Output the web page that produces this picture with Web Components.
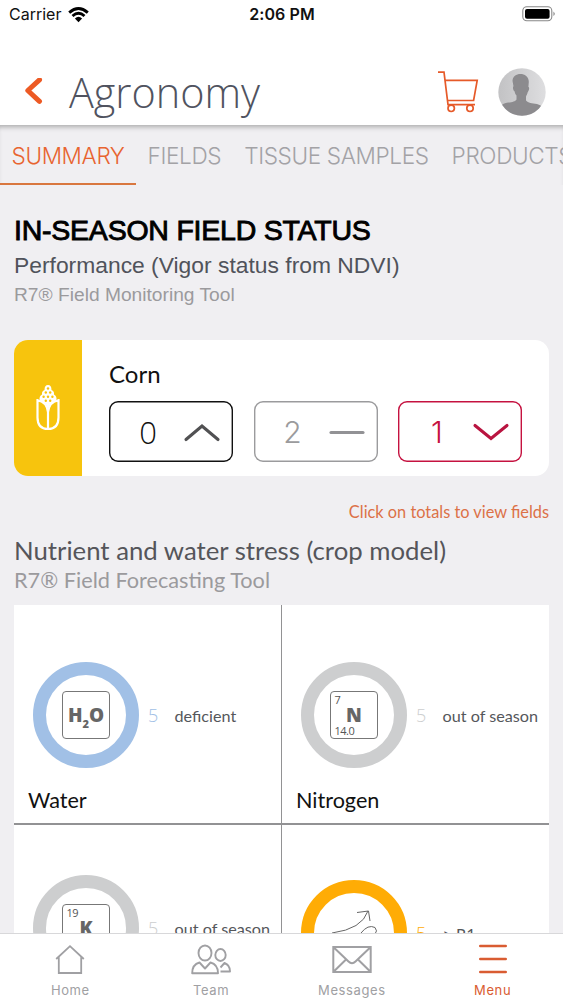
<!DOCTYPE html>
<html lang="en">
<head>
<meta charset="utf-8">
<title>Agronomy</title>
<style>
html,body{margin:0;height:100%;overflow:hidden;background:#f0eff2}
body{font-family:Lato,"Liberation Sans",sans-serif}
</style>
</head>
<body>
<agro-app></agro-app>
<script>
const define = (name, html) => customElements.define(name, class extends HTMLElement {
  constructor() {
    super();
    const t = document.createElement('template');
    t.innerHTML = typeof html === 'function' ? html(this) : html;
    this.attachShadow({mode: 'open'}).append(t.content.cloneNode(true));
  }
});

define('status-bar', `<style>
:host{display:grid;grid-template-columns:1fr auto 1fr;align-items:center;height:29px;padding:0 7px 0 9px;box-sizing:border-box;font:400 16px/29px Inter,sans-serif;color:#111}
.l{display:flex;align-items:center;gap:7px}.t{font-weight:600;font-size:16px;letter-spacing:.1px;margin-right:1px;position:static}.r{justify-self:end;display:flex;margin-top:-2px}
</style>
<div class="l"><span>Carrier</span><svg width="21" height="16" viewBox="0 0 21 16" fill="none" stroke="#000" stroke-width="2.9"><path d="M1.2 5.6Q10.5-2.4 19.8 5.6"/><path d="M4.5 9Q10.5 3.7 16.5 9"/><path d="M6.9 11.5Q10.5 8.2 14.1 11.5L10.5 15.2Z" fill="#000" stroke="none"/></svg></div>
<div class="t">2:06 PM</div>
<div class="r"><svg width="34" height="16" viewBox="0 0 34 16"><rect x=".8" y=".8" width="29" height="14" rx="4" fill="none" stroke="#888" stroke-width="1.1"/><rect x="3" y="3" width="24.6" height="9.7" rx="2"/><path d="M31.5 5.5q2.4 2.3 0 4.6z" fill="#777"/></svg></div>`);

define('app-header', `<style>
:host{display:flex;align-items:center;height:96px;padding:29px 17px 0 24px;box-sizing:border-box}
h1{margin:0 auto 0 26px;font:300 41.400px/60px "Open Sans",sans-serif;color:#50535f}
.cart{margin-right:19px}svg{flex:none;display:block}
</style>
<svg width="19" height="28" viewBox="0 0 19 28" fill="none" stroke="#ed5a24" stroke-width="5" stroke-linecap="round" stroke-linejoin="round"><path d="M15.500 1.800 3.800 12.500 15.500 23.400"/></svg>
<h1><slot></slot></h1>
<svg class="cart" width="42" height="42" viewBox="0 0 42 42" fill="none" stroke="#e65a29" stroke-width="1.700"><path d="M1 1.200h6L11 33.600H38"/><path d="M8 9.400H40.200L36.600 29.500H10.600"/><circle cx="14.200" cy="37.300" r="3.200"/><circle cx="33" cy="37.300" r="3.200"/></svg>
<svg width="48" height="48" viewBox="0 0 48 48"><defs><clipPath id="c"><circle cx="24" cy="24" r="23.700"/></clipPath><linearGradient id="g"><stop stop-color="#c2c2c4"/><stop offset="1" stop-color="#dedee0"/></linearGradient></defs><g clip-path="url(#c)"><path fill="url(#g)" d="M0 0h48v48H0z"/><path fill="#8c8b8e" d="M14.500 13C14.500 3.500 31 3.500 30.800 14l-.4 5c1.300 0 .8 3.700-.7 5.200-.4 2-1.200 3-1.700 4.200v4c2 2.600 6 2.600 11 3.600q3.500.8 5.500 3V50H3V38q2-2.600 7-3.400c5-.8 7-1 8.500-3.200v-3.800q-1.500-1.500-2-4.400c-1.500-.8-2-4.400-1-5z"/></g></svg>`);

define('tab-item', `<style>
:host{display:block;height:60px;box-sizing:border-box;padding:0 11.500px 0 11.500px;font:300 22.600px/62px Inter,sans-serif;letter-spacing:-.38px;color:#a3a2a6;white-space:nowrap;flex:none}
:host([active]){color:#e86430;border-bottom:2px solid #d9773f}
</style><slot></slot>`);

define('tab-strip', `<style>
:host{display:flex;height:60px;overflow:hidden;box-shadow:inset 0 5px 5px -3px #aaa}
</style><slot></slot>`);

define('crop-total', el => `<style>
:host{display:flex;align-items:center;box-sizing:border-box;width:124px;height:61px;box-shadow:inset 0 0 0 1.400px currentColor;border-radius:9px;padding:0 12px 0 27px;justify-content:space-between}
span{width:24px;text-align:center;line-height:60px}
svg{display:block}
</style><span><slot></slot></span><svg width="38" height="20" viewBox="0 0 38 20" fill="none" stroke="${el.getAttribute('tone')}" stroke-width="3.100" stroke-linecap="round"><path d="${el.getAttribute('mark')}"/></svg>`);

define('crop-card', `<style>
:host{display:flex;height:136px;border-radius:14px;overflow:hidden;background:#fff}
.side{width:68px;background:#f7c40d;display:grid;place-items:center}
.body{padding:20px 0 0 27px}
.name{font:400 24px/28px Lato,sans-serif;color:#111}
.row{display:flex;gap:20.500px;margin-top:13px}
.a{color:#111;font:300 31px "Open Sans",sans-serif}.b{color:#9b9b9d;font:300 30px Inter,sans-serif}.c{color:#c51240;font:300 30px Inter,sans-serif}
</style>
<div class="side"><svg width="26" height="48" viewBox="0 0 26 48" fill="none" stroke="#fff" stroke-width="2.200"><path d="M2.500 15v18.500q0 11.500 10.500 11.500t10.500-11.500V15M13 24V45M2.500 16.500q9 1 10.500 11.500M23.500 16.500q-9 1-10.500 11.500"/><path fill="#fff" stroke="none" d="M9.500 6Q9.500 1 13 1T16.500 6Q19.500 7 19 10.500 22 12 21.500 16.500 15.500 18 13 25 10.500 18 4.500 16.500 4 12 7 10.500 6.500 7 9.500 6Z"/><g fill="#f7c40d" stroke="none"><circle cx="13" cy="4.500" r="1.200"/><circle cx="10.800" cy="8.500" r="1.200"/><circle cx="15.200" cy="8.500" r="1.200"/><circle cx="8.600" cy="12.800" r="1.200"/><circle cx="13" cy="12.800" r="1.200"/><circle cx="17.400" cy="12.800" r="1.200"/><circle cx="10.800" cy="16.800" r="1.200"/><circle cx="15.200" cy="16.800" r="1.200"/></g></svg></div>
<div class="body"><div class="name"><slot></slot></div><div class="row">
<crop-total class="a" tone="#515153" mark="M3 17.500 19 4 35 17.500">0</crop-total>
<crop-total class="b" tone="#929295" mark="M3 10.500H35">2</crop-total>
<crop-total class="c" tone="#b91440" mark="M3 3.500 19 16.500 35 3.500">1</crop-total></div></div>`);

define('section-head', `<style>
:host{display:block}
</style><slot></slot>`);

define('stress-ring', `<style>
:host{display:grid;place-items:center;box-sizing:border-box;width:106px;height:106px;border:13px solid var(--ring);border-radius:50%;flex:none}
</style><slot></slot>`);

define('element-tile', el => `<style>
:host{display:grid;grid-template-rows:14px 18px 14px;box-sizing:border-box;width:48px;height:48px;border:1px solid #777;border-radius:4px;color:#555}
b{font:800 19px/18px "Open Sans",sans-serif;text-align:center;color:#666}
i{font:400 11px/14px "Open Sans",sans-serif;letter-spacing:-.5px;padding-left:3.500px}.n{padding-top:1px}
</style><i class="n">${el.getAttribute('number') || ''}</i><b><slot></slot></b><i>${el.getAttribute('mass') || ''}</i>`);

define('stress-cell', el => `<style>
:host{display:block;box-sizing:border-box;padding:56.500px 0 0 19px;background:#fff}
.row{display:flex;align-items:center}
.n{font:300 18px/24px "Open Sans",sans-serif;color:var(--ring);width:26.500px;margin-left:9px;padding-top:1px}
.s{font:400 16.200px/24px Lato,sans-serif;color:#55575b;padding-top:2px;white-space:nowrap}
.name{font:400 21.600px/30px Lato,sans-serif;color:#111;margin:17.500px 0 0 -5px}
</style><div class="row"><stress-ring><slot></slot></stress-ring><span class="n">5</span><span class="s">${el.getAttribute('state')}</span></div><div class="name">${el.getAttribute('name') || ''}</div>`);

define('stress-grid', `<style>
:host{display:grid;grid-template-columns:267px 267px;grid-template-rows:218px 218px;gap:1.500px 1px;background:#929294;height:438px}
</style><slot></slot>`);

define('nav-item', `<style>
:host{display:flex;flex-direction:column;align-items:center;flex:1;padding-top:8px;font:400 13px/16px Inter,sans-serif;letter-spacing:.6px;color:#a0a0a3}
:host([active]){color:#d95c32}
.i{height:34px;display:grid;place-items:center;margin-bottom:6px}
</style><div class="i"><slot name="icon"></slot></div><slot></slot>`);

define('nav-bar', `<style>
:host{display:flex;height:67px;box-sizing:border-box;border-top:1px solid #d8d8da;background:#fff;flex:none}
</style><slot></slot>`);

define('agro-app', `<style>
:host{display:flex;flex-direction:column;height:1000px;width:563px;overflow:hidden;background:#f0eff2}
.top{background:#fff}
main{flex:1;min-height:0;overflow:hidden;padding:28px 14px 0}
.t,.p,.m,.h,.f,.k{white-space:nowrap}
.t{font:400 28.500px/34px "Liberation Sans",sans-serif;letter-spacing:-.23px;-webkit-text-stroke:.9px #000;color:#000}
.p{font:400 22.850px/32px "Liberation Sans",sans-serif;color:#50535b;margin-top:2px}
.m{font:400 19.200px/26px "Liberation Sans",sans-serif;color:#9b9a9d;margin:1px 0 32px}
.k{font:400 16.350px/22px Lato,sans-serif;color:#dc7147;text-align:right;margin:25px 0 10px}
.h{font:400 25.750px/34px Lato,sans-serif;color:#55555a}
.f{font:400 21.700px/26px Lato,sans-serif;color:#9b9a9d;margin-bottom:12px}
stress-cell{--ring:#cdcecf}.w{--ring:#a1c0e6}.o{--ring:#ffac05}
.r2{padding-top:50px}.o.r2{padding-top:55px}
nav-item svg{display:block}
</style>
<div class="top"><status-bar></status-bar><app-header>Agronomy</app-header></div>
<tab-strip><tab-item active>SUMMARY</tab-item><tab-item>FIELDS</tab-item><tab-item>TISSUE SAMPLES</tab-item><tab-item>PRODUCTS</tab-item></tab-strip>
<main>
<section-head><div class="t">IN-SEASON FIELD STATUS</div><div class="p">Performance (Vigor status from NDVI)</div><div class="m">R7® Field Monitoring Tool</div></section-head>
<crop-card>Corn</crop-card>
<div class="k">Click on totals to view fields</div>
<section-head><div class="h">Nutrient and water stress (crop model)</div><div class="f">R7® Field Forecasting Tool</div></section-head>
<stress-grid>
<stress-cell class="w" state="deficient" name="Water"><element-tile>H<sub style="font-size:11px;line-height:0;vertical-align:-6px">2</sub>O</element-tile></stress-cell>
<stress-cell state="out of season" name="Nitrogen"><element-tile number="7" mass="14.0">N</element-tile></stress-cell>
<stress-cell class="r2" state="out of season"><element-tile number="19">K</element-tile></stress-cell>
<stress-cell class="o r2" state="&gt; R1"><svg width="60" height="60" viewBox="0 0 60 60" fill="none" stroke="#666" stroke-width="1"><path d="M8 30Q38 26 44 8M33 9.500 44.500 8 46 18M37 30Q44 21 51 24.500 54 28 51 31"/></svg></stress-cell>
</stress-grid>
</main>
<nav-bar>
<nav-item><svg slot="icon" width="30" height="31" viewBox="0 0 30 31" fill="none" stroke="#a0a0a3" stroke-width="1.800"><path d="M1.200 15 15 2.200 28.800 15M3.800 13v16H26.200V13"/></svg>Home</nav-item>
<nav-item><svg slot="icon" width="40" height="31" viewBox="0 0 40 31" fill="none" stroke="#a0a0a3" stroke-width="1.900" stroke-linejoin="round"><ellipse cx="14" cy="9" rx="6.500" ry="7.500"/><ellipse cx="29.500" cy="11" rx="5.200" ry="6"/><path d="M8.500 18.500Q1.200 20.500 1.200 29.200H27Q27 20.500 19.500 18.500L14 24.500ZM29.500 27.500H39Q39 21 33.500 19L29.500 23.500"/></svg>Team</nav-item>
<nav-item><svg slot="icon" width="40" height="29" viewBox="0 0 40 29" fill="none" stroke="#a0a0a3" stroke-width="2"><path d="M1.300 2h37.400v25H1.300ZM1.300 2 16.500 16.500Q20 20 23.500 16.500L38.700 2M1.300 27 14 14.500M38.700 27 26 14.500"/></svg>Messages</nav-item>
<nav-item active><svg slot="icon" width="30" height="30" viewBox="0 0 30 30" fill="none" stroke="#d95c32" stroke-width="2.600" stroke-linecap="round"><path d="M2.300 2H27.700M2.300 15H27.700M2.300 28H27.700"/></svg>Menu</nav-item>
</nav-bar>`);
</script>
</body>
</html>
